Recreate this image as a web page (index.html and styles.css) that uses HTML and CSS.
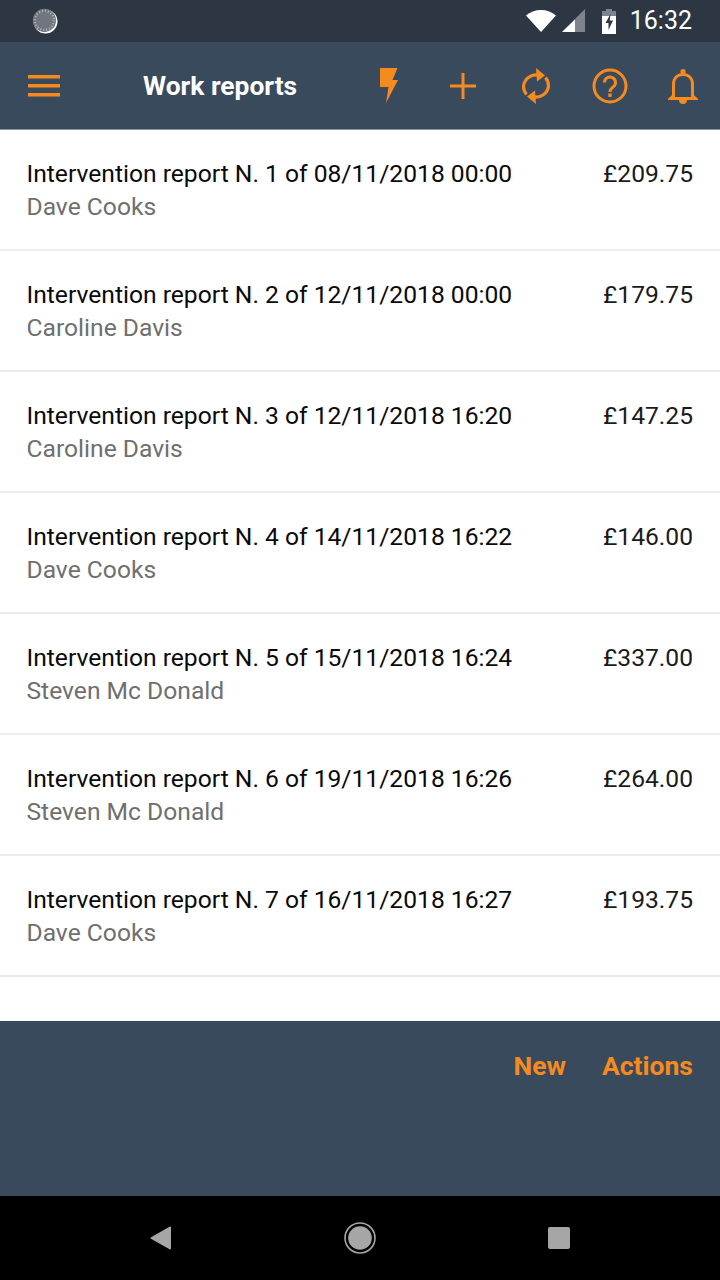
FILE: index.html
```html
<!DOCTYPE html>
<html lang="en">
<head>
<meta charset="utf-8">
<title>Work reports</title>
<link rel="stylesheet" href="styles.css">
</head>
<body>
<div class="screen">
  <div class="statusbar">
    <svg class="st-left" width="26" height="26" viewBox="0 0 26 26"><circle cx="13.5" cy="13.5" r="12" fill="#fff"/><circle cx="12.4" cy="12.4" r="11.6" fill="#70757f"/><circle cx="12.4" cy="12.4" r="9.5" fill="none" stroke="#b5b8be" stroke-width="2.4" stroke-dasharray="1 2"/></svg>
    <div class="st-right">
      <svg width="32" height="26" viewBox="0 0 32 26"><path d="M1 7.500C9 0 23 0 31 7.500L16 24Z" fill="#fff"/></svg>
      <svg class="st-signal" width="25" height="26" viewBox="0 0 25 26"><path d="M24 1V24H1Z" fill="#7d848e"/><path d="M14 11.500V24H1Z" fill="#fff"/></svg>
      <svg class="st-batt" width="16" height="26" viewBox="0 0 16 26"><path d="M5 1h6v2h4v23H1V3h4Z" fill="#fff"/><path d="M5 1h6v2h4v5H1V3h4Z" fill="#7d848e"/><path d="M9.500 6 4.500 15h3v7l4.500-9.500H8.800Z" fill="#2d3743"/></svg>
      <span class="st-time">16:32</span>
    </div>
  </div>
  <header class="toolbar">
    <svg class="ic-menu" width="32" height="22" viewBox="0 0 32 22"><path d="M0 0h32v3.500H0zM0 9h32v3.500H0zM0 18h32v3.500H0z" fill="#f58a1f"/></svg>
    <h1 class="title">Work reports</h1>
    <div class="actions">
      <span class="act"><svg width="20" height="36" viewBox="0 0 20 36"><path d="M1 0h17.500l-5 12H19L7 35l2.500-16H1Z" fill="#f58a1f"/></svg></span>
      <span class="act"><svg width="26" height="26" viewBox="0 0 26 26"><path d="M11.500 0h3v11.500H26v3H14.500V26h-3V14.500H0v-3h11.500Z" fill="#f58a1f"/></svg></span>
      <span class="act"><svg width="32" height="38" viewBox="0 0 32 38" fill="none"><path d="M22 9.500A12.500 12.500 0 0 0 3.500 19c0 3.300 1 6 3 8.500" stroke="#f58a1f" stroke-width="3.200"/><path d="M10 28.500A12.500 12.500 0 0 0 28.500 19c0-3.300-1-6-3-8.500" stroke="#f58a1f" stroke-width="3.200"/><path d="M16 1l9 7.500-8 6Z" fill="#f58a1f"/><path d="M16 37l-9-7.500 8-6Z" fill="#f58a1f"/></svg></span>
      <span class="act"><svg width="36" height="36" viewBox="0 0 36 36" fill="none"><circle cx="18" cy="18" r="16" stroke="#f58a1f" stroke-width="3"/><path d="M12.500 14.500a5.500 5.500 0 1 1 8.800 4.400c-2 1.500-3.300 2.400-3.300 5" stroke="#f58a1f" stroke-width="3"/><rect x="16.300" y="25.500" width="3.400" height="3.400" fill="#f58a1f"/></svg></span>
      <span class="act"><svg width="30" height="36" viewBox="0 0 30 36" fill="none"><path d="M5.500 28V16.500C5.500 10 9.500 6.500 15 6.500s9.500 3.500 9.500 10V28l3 2.500H2.500Z" stroke="#f58a1f" stroke-width="3"/><circle cx="15" cy="3.500" r="2.600" fill="#f58a1f"/><path d="M11 32h8a4 4 0 0 1-8 0Z" fill="#f58a1f"/></svg></span>
    </div>
  </header>
  <main class="list">
    <div class="row"><div class="row-text"><div class="row-title">Intervention report N. 1 of 08/11/2018 00:00</div><div class="row-sub">Dave Cooks</div></div><div class="row-amt">£209.75</div></div>
    <div class="row"><div class="row-text"><div class="row-title">Intervention report N. 2 of 12/11/2018 00:00</div><div class="row-sub">Caroline Davis</div></div><div class="row-amt">£179.75</div></div>
    <div class="row"><div class="row-text"><div class="row-title">Intervention report N. 3 of 12/11/2018 16:20</div><div class="row-sub">Caroline Davis</div></div><div class="row-amt">£147.25</div></div>
    <div class="row"><div class="row-text"><div class="row-title">Intervention report N. 4 of 14/11/2018 16:22</div><div class="row-sub">Dave Cooks</div></div><div class="row-amt">£146.00</div></div>
    <div class="row"><div class="row-text"><div class="row-title">Intervention report N. 5 of 15/11/2018 16:24</div><div class="row-sub">Steven Mc Donald</div></div><div class="row-amt">£337.00</div></div>
    <div class="row"><div class="row-text"><div class="row-title">Intervention report N. 6 of 19/11/2018 16:26</div><div class="row-sub">Steven Mc Donald</div></div><div class="row-amt">£264.00</div></div>
    <div class="row"><div class="row-text"><div class="row-title">Intervention report N. 7 of 16/11/2018 16:27</div><div class="row-sub">Dave Cooks</div></div><div class="row-amt">£193.75</div></div>
  </main>
  <footer class="bottom">
    <span class="btn">New</span>
    <span class="btn">Actions</span>
  </footer>
  <nav class="navbar">
    <svg width="22" height="24" viewBox="0 0 22 24"><path d="M20 1.500V22.500L1.500 12Z" fill="#a6a6a6" stroke="#a6a6a6" stroke-width="2" stroke-linejoin="round"/></svg>
    <svg width="32" height="32" viewBox="0 0 32 32"><circle cx="16" cy="16" r="15" fill="none" stroke="#a6a6a6" stroke-width="1.600"/><circle cx="16" cy="16" r="11.800" fill="#a6a6a6"/></svg>
    <span class="nav-square"></span>
  </nav>
</div>
</body>
</html>
```
FILE: styles.css
```css
* { box-sizing: border-box; }
html, body { margin: 0; padding: 0; }
body { font-family: Roboto, "Liberation Sans", sans-serif; background: #fff; }
.screen { width: 720px; height: 1280px; display: flex; flex-direction: column; overflow: hidden; }
.statusbar { height: 42px; background: #2d3743; display: flex; align-items: center; justify-content: space-between; padding: 0 28px 0 32px; color: #fff; flex: none; }
.st-right { display: flex; align-items: center; }
.st-signal { margin-left: 4px; }
.st-batt { margin-left: 15px; }
.st-time { margin-left: 13px; font-size: 25px; line-height: 44px; }
.toolbar { height: 88px; background: #3a4a5d; display: flex; align-items: center; padding: 1px 0 0 28px; border-bottom: 1px solid #8a94a0; flex: none; }
.title { margin: 0 0 0 83px; font-size: 26.400px; line-height: 36px; font-weight: 700; color: #fff; flex: 1; }
.actions { display: flex; align-items: center; gap: 0; }
.act { width: 73.500px; display: flex; justify-content: center; align-items: center; }
.list { flex: 1; background: #fff; }
.row { height: 121px; padding: 27px 27px 0 26.500px; display: flex; justify-content: space-between; border-bottom: 2px solid #ececec; }
.row-title { font-size: 24.640px; line-height: 33px; color: #0a0a0a; }
.row-sub { font-size: 24.640px; line-height: 33px; color: #6f6f6f; }
.row-amt { font-size: 24.640px; line-height: 33px; color: #1a1a1a; }
.bottom { height: 175px; background: #3a4a5d; display: flex; justify-content: flex-end; gap: 36px; padding: 28px 27px 0; flex: none; }
.btn { font-size: 26.500px; line-height: 34px; font-weight: 700; color: #f58a1f; }
.navbar { height: 84px; background: #000; display: flex; align-items: center; justify-content: space-between; padding: 0 150px; flex: none; }
.nav-square { width: 22px; height: 22px; background: #a6a6a6; border-radius: 2px; }
```
